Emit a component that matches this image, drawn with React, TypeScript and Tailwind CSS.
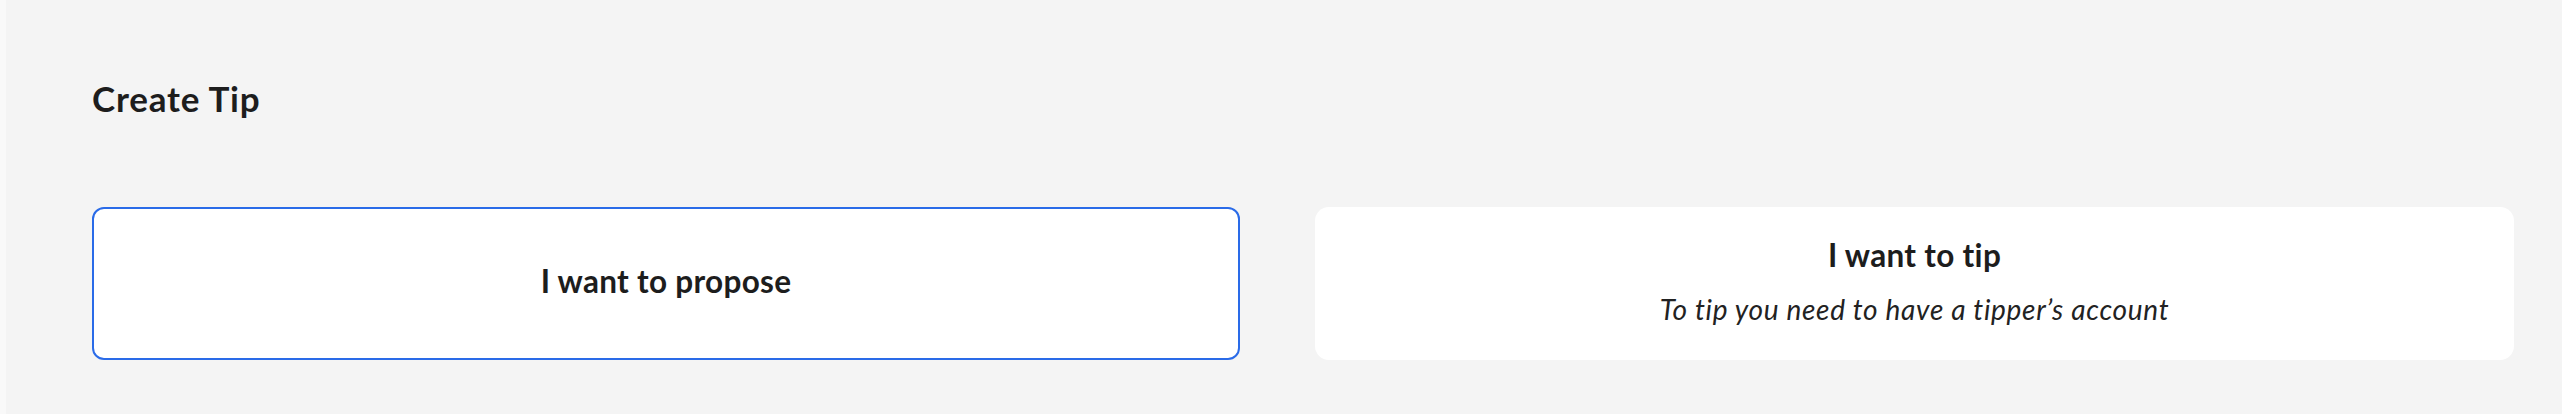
import React from 'react';

const font = { fontFamily: 'Lato, "Open Sans", sans-serif' };

export default function App() {
  return (
    <div className="flex min-h-[414px] bg-[#f9f9f9] pl-[6px]" style={font}>
      <div className="flex-1 bg-[#f4f4f4] pl-[86px] pr-[48px] pt-[74px] pb-[54px] text-[#1d1d1d]">
        <h1 className="text-[35px] font-bold leading-[48px] tracking-[0.8px]">Create Tip</h1>

        <div className="mt-[85px] flex gap-[75px]">
          <button className="flex h-[153px] w-[1148px] items-center justify-center rounded-[12px] border-2 border-[#2a6be8] bg-white pb-[6px]">
            <span className="text-[31.5px] font-bold leading-[36px] tracking-[0.3px]">I want to propose</span>
          </button>

          <button className="flex h-[153px] flex-1 flex-col items-center justify-center rounded-[14px] bg-white pb-[4px]">
            <span className="text-[31.5px] font-bold leading-[36px] tracking-[0.3px]">I want to tip</span>
            <span className="mt-[19px] text-[28px] italic leading-[34px] tracking-[0.7px] text-[#222]">
              To tip you need to have a tipper’s account
            </span>
          </button>
        </div>
      </div>
    </div>
  );
}
